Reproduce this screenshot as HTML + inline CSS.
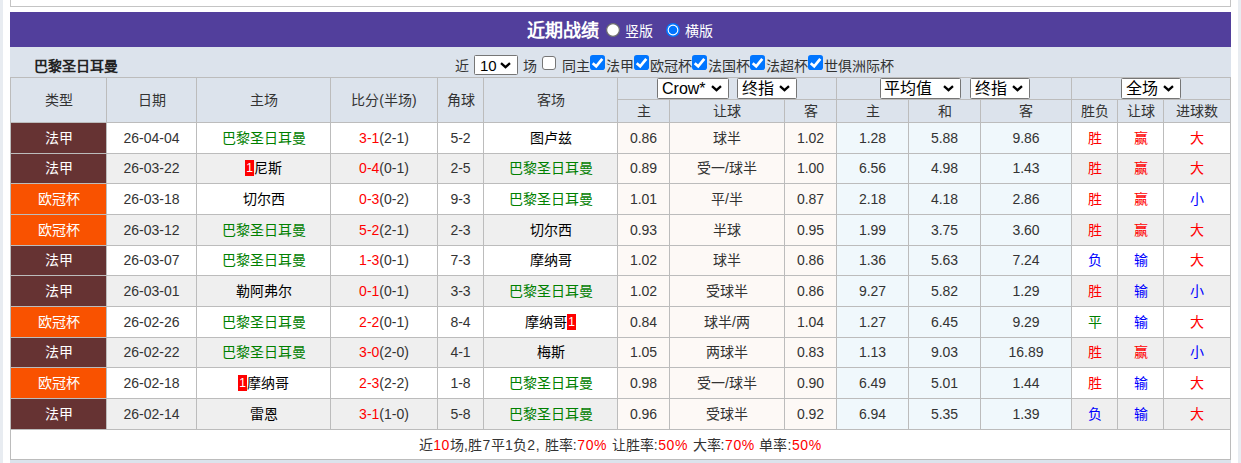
<!DOCTYPE html>
<html lang="zh-CN"><head><meta charset="utf-8"><title>近期战绩</title>
<style>
html,body{margin:0;padding:0;}
body{width:1241px;height:463px;overflow:hidden;background:#e8ecf1;position:relative;font-family:"Liberation Sans",sans-serif;font-size:14px;color:#333;}
#wrap{position:absolute;left:3px;top:0;width:1235px;height:463px;background:#fff;}
.r{position:absolute;}
.ab{position:absolute;}
.t14{font-size:14px;line-height:16px;white-space:nowrap;color:#333;}
.c{position:absolute;text-align:center;white-space:nowrap;overflow:visible;}
.bd{display:inline-block;background:#f00;color:#fff;font-size:12px;width:9px;height:16px;line-height:16px;vertical-align:middle;text-align:center;font-weight:normal;position:relative;top:-1px;}
.red{color:#f00;}
.L{letter-spacing:0.62px;}
#prev{position:absolute;left:10px;top:-10px;width:1219px;height:15px;border:1px solid #c4c4c4;background:#fff;}
#bar{position:absolute;left:10px;top:12px;width:1221px;height:35px;background:#523f9c;color:#fff;}
#title{position:absolute;left:517px;top:9px;font-size:18px;font-weight:bold;line-height:20px;}
.rl{position:absolute;top:11px;font-size:14px;line-height:16px;}
#team{position:absolute;left:34px;top:57px;font-weight:bold;font-size:14px;color:#222;line-height:18px;}
.sel{position:absolute;box-sizing:border-box;border:1px solid #767676;background:#fff;color:#000;border-radius:1.5px;}
.sel .t{position:absolute;top:0;white-space:nowrap;}
.chev{position:absolute;}
</style></head><body><div id="wrap"></div>
<div id="prev"></div>
<div id="bar"><div id="title">近期战绩</div>
<svg class="ab" style="left:596px;top:11px" width="14" height="14" viewBox="0 0 14 14"><circle cx="7" cy="7" r="6.4" fill="#fff" stroke="#6d6d6d" stroke-width="1.2"/></svg><div class="rl" style="left:615px;">竖版</div>
<svg class="ab" style="left:656px;top:11px" width="14" height="14" viewBox="0 0 14 14"><circle cx="7" cy="7" r="7" fill="#0075ff"/><circle cx="7" cy="7" r="5.4" fill="#fff"/><circle cx="7" cy="7" r="4.3" fill="#0075ff"/></svg><div class="rl" style="left:675px;">横版</div>
</div>
<div class="r" style="left:10px;top:47px;width:1221px;height:76px;background:#dce3ec;"></div>
<div class="r" style="left:10px;top:123px;width:1221px;height:30px;background:#fff;"></div>
<div class="r" style="left:618px;top:123px;width:218px;height:30px;background:#fdf9f6;"></div>
<div class="r" style="left:837px;top:123px;width:234px;height:30px;background:#f0f8fc;"></div>
<div class="r" style="left:10px;top:123px;width:96px;height:30px;background:#663333;"></div>
<div class="r" style="left:10px;top:154px;width:1221px;height:29px;background:#efefef;"></div>
<div class="r" style="left:618px;top:154px;width:218px;height:29px;background:#fdf9f6;"></div>
<div class="r" style="left:837px;top:154px;width:234px;height:29px;background:#f0f8fc;"></div>
<div class="r" style="left:10px;top:154px;width:96px;height:29px;background:#663333;"></div>
<div class="r" style="left:10px;top:184px;width:1221px;height:30px;background:#fff;"></div>
<div class="r" style="left:618px;top:184px;width:218px;height:30px;background:#fdf9f6;"></div>
<div class="r" style="left:837px;top:184px;width:234px;height:30px;background:#f0f8fc;"></div>
<div class="r" style="left:10px;top:184px;width:96px;height:30px;background:#f95200;"></div>
<div class="r" style="left:10px;top:215px;width:1221px;height:30px;background:#efefef;"></div>
<div class="r" style="left:618px;top:215px;width:218px;height:30px;background:#fdf9f6;"></div>
<div class="r" style="left:837px;top:215px;width:234px;height:30px;background:#f0f8fc;"></div>
<div class="r" style="left:10px;top:215px;width:96px;height:30px;background:#f95200;"></div>
<div class="r" style="left:10px;top:246px;width:1221px;height:29px;background:#fff;"></div>
<div class="r" style="left:618px;top:246px;width:218px;height:29px;background:#fdf9f6;"></div>
<div class="r" style="left:837px;top:246px;width:234px;height:29px;background:#f0f8fc;"></div>
<div class="r" style="left:10px;top:246px;width:96px;height:29px;background:#663333;"></div>
<div class="r" style="left:10px;top:276px;width:1221px;height:30px;background:#efefef;"></div>
<div class="r" style="left:618px;top:276px;width:218px;height:30px;background:#fdf9f6;"></div>
<div class="r" style="left:837px;top:276px;width:234px;height:30px;background:#f0f8fc;"></div>
<div class="r" style="left:10px;top:276px;width:96px;height:30px;background:#663333;"></div>
<div class="r" style="left:10px;top:307px;width:1221px;height:30px;background:#fff;"></div>
<div class="r" style="left:618px;top:307px;width:218px;height:30px;background:#fdf9f6;"></div>
<div class="r" style="left:837px;top:307px;width:234px;height:30px;background:#f0f8fc;"></div>
<div class="r" style="left:10px;top:307px;width:96px;height:30px;background:#f95200;"></div>
<div class="r" style="left:10px;top:338px;width:1221px;height:29px;background:#efefef;"></div>
<div class="r" style="left:618px;top:338px;width:218px;height:29px;background:#fdf9f6;"></div>
<div class="r" style="left:837px;top:338px;width:234px;height:29px;background:#f0f8fc;"></div>
<div class="r" style="left:10px;top:338px;width:96px;height:29px;background:#663333;"></div>
<div class="r" style="left:10px;top:368px;width:1221px;height:30px;background:#fff;"></div>
<div class="r" style="left:618px;top:368px;width:218px;height:30px;background:#fdf9f6;"></div>
<div class="r" style="left:837px;top:368px;width:234px;height:30px;background:#f0f8fc;"></div>
<div class="r" style="left:10px;top:368px;width:96px;height:30px;background:#f95200;"></div>
<div class="r" style="left:10px;top:399px;width:1221px;height:30px;background:#efefef;"></div>
<div class="r" style="left:618px;top:399px;width:218px;height:30px;background:#fdf9f6;"></div>
<div class="r" style="left:837px;top:399px;width:234px;height:30px;background:#f0f8fc;"></div>
<div class="r" style="left:10px;top:399px;width:96px;height:30px;background:#663333;"></div>
<div class="r" style="left:10px;top:430px;width:1221px;height:29px;background:#fff;"></div>
<div class="r" style="left:10px;top:460px;width:1221px;height:3px;background:#dce3ec;"></div>
<div class="r" style="left:10px;top:77px;width:1221px;height:1px;background:#bcbcbc;"></div>
<div class="r" style="left:10px;top:122px;width:1221px;height:1px;background:#bcbcbc;"></div>
<div class="r" style="left:10px;top:153px;width:1221px;height:1px;background:#bcbcbc;"></div>
<div class="r" style="left:10px;top:183px;width:1221px;height:1px;background:#bcbcbc;"></div>
<div class="r" style="left:10px;top:214px;width:1221px;height:1px;background:#bcbcbc;"></div>
<div class="r" style="left:10px;top:245px;width:1221px;height:1px;background:#bcbcbc;"></div>
<div class="r" style="left:10px;top:275px;width:1221px;height:1px;background:#bcbcbc;"></div>
<div class="r" style="left:10px;top:306px;width:1221px;height:1px;background:#bcbcbc;"></div>
<div class="r" style="left:10px;top:337px;width:1221px;height:1px;background:#bcbcbc;"></div>
<div class="r" style="left:10px;top:367px;width:1221px;height:1px;background:#bcbcbc;"></div>
<div class="r" style="left:10px;top:398px;width:1221px;height:1px;background:#bcbcbc;"></div>
<div class="r" style="left:10px;top:429px;width:1221px;height:1px;background:#bcbcbc;"></div>
<div class="r" style="left:10px;top:459px;width:1221px;height:1px;background:#bcbcbc;"></div>
<div class="r" style="left:617px;top:99px;width:614px;height:1px;background:#bcbcbc;"></div>
<div class="r" style="left:10px;top:77px;width:1px;height:382px;background:#bcbcbc;"></div>
<div class="r" style="left:106px;top:77px;width:1px;height:352px;background:#bcbcbc;"></div>
<div class="r" style="left:196px;top:77px;width:1px;height:352px;background:#bcbcbc;"></div>
<div class="r" style="left:330px;top:77px;width:1px;height:352px;background:#bcbcbc;"></div>
<div class="r" style="left:437px;top:77px;width:1px;height:352px;background:#bcbcbc;"></div>
<div class="r" style="left:483px;top:77px;width:1px;height:352px;background:#bcbcbc;"></div>
<div class="r" style="left:617px;top:77px;width:1px;height:352px;background:#bcbcbc;"></div>
<div class="r" style="left:669px;top:99px;width:1px;height:330px;background:#bcbcbc;"></div>
<div class="r" style="left:784px;top:99px;width:1px;height:330px;background:#bcbcbc;"></div>
<div class="r" style="left:836px;top:77px;width:1px;height:352px;background:#bcbcbc;"></div>
<div class="r" style="left:908px;top:99px;width:1px;height:330px;background:#bcbcbc;"></div>
<div class="r" style="left:980px;top:99px;width:1px;height:330px;background:#bcbcbc;"></div>
<div class="r" style="left:1071px;top:77px;width:1px;height:352px;background:#bcbcbc;"></div>
<div class="r" style="left:1117px;top:99px;width:1px;height:330px;background:#bcbcbc;"></div>
<div class="r" style="left:1163px;top:99px;width:1px;height:330px;background:#bcbcbc;"></div>
<div class="r" style="left:1230px;top:77px;width:1px;height:382px;background:#bcbcbc;"></div>
<div class="c" style="left:11px;top:78px;width:95px;height:44px;line-height:44px;">类型</div>
<div class="c" style="left:107px;top:78px;width:89px;height:44px;line-height:44px;">日期</div>
<div class="c" style="left:197px;top:78px;width:133px;height:44px;line-height:44px;">主场</div>
<div class="c" style="left:331px;top:78px;width:106px;height:44px;line-height:44px;">比分(半场)</div>
<div class="c" style="left:438px;top:78px;width:45px;height:44px;line-height:44px;">角球</div>
<div class="c" style="left:484px;top:78px;width:133px;height:44px;line-height:44px;">客场</div>
<div class="c" style="left:618px;top:100px;width:51px;height:22px;line-height:22px;">主</div>
<div class="c" style="left:670px;top:100px;width:114px;height:22px;line-height:22px;">让球</div>
<div class="c" style="left:785px;top:100px;width:51px;height:22px;line-height:22px;">客</div>
<div class="c" style="left:837px;top:100px;width:71px;height:22px;line-height:22px;">主</div>
<div class="c" style="left:909px;top:100px;width:71px;height:22px;line-height:22px;">和</div>
<div class="c" style="left:981px;top:100px;width:90px;height:22px;line-height:22px;">客</div>
<div class="c" style="left:1072px;top:100px;width:45px;height:22px;line-height:22px;">胜负</div>
<div class="c" style="left:1118px;top:100px;width:45px;height:22px;line-height:22px;">让球</div>
<div class="c" style="left:1164px;top:100px;width:66px;height:22px;line-height:22px;">进球数</div>
<div class="c" style="left:11px;top:123px;width:95px;height:30px;line-height:30px;color:#fff">法甲</div>
<div class="c" style="left:107px;top:123px;width:89px;height:30px;line-height:30px;color:#333">26-04-04</div>
<div class="c" style="left:197px;top:123px;width:133px;height:30px;line-height:30px;"><span style="color:#008000">巴黎圣日耳曼</span></div>
<div class="c" style="left:331px;top:123px;width:106px;height:30px;line-height:30px;color:#333"><span style="color:#f00">3-1</span>(2-1)</div>
<div class="c" style="left:438px;top:123px;width:45px;height:30px;line-height:30px;color:#333">5-2</div>
<div class="c" style="left:484px;top:123px;width:133px;height:30px;line-height:30px;"><span style="color:#000">图卢兹</span></div>
<div class="c" style="left:618px;top:123px;width:51px;height:30px;line-height:30px;color:#333">0.86</div>
<div class="c" style="left:670px;top:123px;width:114px;height:30px;line-height:30px;color:#333">球半</div>
<div class="c" style="left:785px;top:123px;width:51px;height:30px;line-height:30px;color:#333">1.02</div>
<div class="c" style="left:837px;top:123px;width:71px;height:30px;line-height:30px;color:#333">1.28</div>
<div class="c" style="left:909px;top:123px;width:71px;height:30px;line-height:30px;color:#333">5.88</div>
<div class="c" style="left:981px;top:123px;width:90px;height:30px;line-height:30px;color:#333">9.86</div>
<div class="c" style="left:1072px;top:123px;width:45px;height:30px;line-height:30px;color:#f00">胜</div>
<div class="c" style="left:1118px;top:123px;width:45px;height:30px;line-height:30px;color:#f00">赢</div>
<div class="c" style="left:1164px;top:123px;width:66px;height:30px;line-height:30px;color:#f00">大</div>
<div class="c" style="left:11px;top:154px;width:95px;height:29px;line-height:29px;color:#fff">法甲</div>
<div class="c" style="left:107px;top:154px;width:89px;height:29px;line-height:29px;color:#333">26-03-22</div>
<div class="c" style="left:197px;top:154px;width:133px;height:29px;line-height:29px;"><span style="color:#000"><span class="bd">1</span>尼斯</span></div>
<div class="c" style="left:331px;top:154px;width:106px;height:29px;line-height:29px;color:#333"><span style="color:#f00">0-4</span>(0-1)</div>
<div class="c" style="left:438px;top:154px;width:45px;height:29px;line-height:29px;color:#333">2-5</div>
<div class="c" style="left:484px;top:154px;width:133px;height:29px;line-height:29px;"><span style="color:#008000">巴黎圣日耳曼</span></div>
<div class="c" style="left:618px;top:154px;width:51px;height:29px;line-height:29px;color:#333">0.89</div>
<div class="c" style="left:670px;top:154px;width:114px;height:29px;line-height:29px;color:#333">受一/球半</div>
<div class="c" style="left:785px;top:154px;width:51px;height:29px;line-height:29px;color:#333">1.00</div>
<div class="c" style="left:837px;top:154px;width:71px;height:29px;line-height:29px;color:#333">6.56</div>
<div class="c" style="left:909px;top:154px;width:71px;height:29px;line-height:29px;color:#333">4.98</div>
<div class="c" style="left:981px;top:154px;width:90px;height:29px;line-height:29px;color:#333">1.43</div>
<div class="c" style="left:1072px;top:154px;width:45px;height:29px;line-height:29px;color:#f00">胜</div>
<div class="c" style="left:1118px;top:154px;width:45px;height:29px;line-height:29px;color:#f00">赢</div>
<div class="c" style="left:1164px;top:154px;width:66px;height:29px;line-height:29px;color:#f00">大</div>
<div class="c" style="left:11px;top:184px;width:95px;height:30px;line-height:30px;color:#fff">欧冠杯</div>
<div class="c" style="left:107px;top:184px;width:89px;height:30px;line-height:30px;color:#333">26-03-18</div>
<div class="c" style="left:197px;top:184px;width:133px;height:30px;line-height:30px;"><span style="color:#000">切尔西</span></div>
<div class="c" style="left:331px;top:184px;width:106px;height:30px;line-height:30px;color:#333"><span style="color:#f00">0-3</span>(0-2)</div>
<div class="c" style="left:438px;top:184px;width:45px;height:30px;line-height:30px;color:#333">9-3</div>
<div class="c" style="left:484px;top:184px;width:133px;height:30px;line-height:30px;"><span style="color:#008000">巴黎圣日耳曼</span></div>
<div class="c" style="left:618px;top:184px;width:51px;height:30px;line-height:30px;color:#333">1.01</div>
<div class="c" style="left:670px;top:184px;width:114px;height:30px;line-height:30px;color:#333">平/半</div>
<div class="c" style="left:785px;top:184px;width:51px;height:30px;line-height:30px;color:#333">0.87</div>
<div class="c" style="left:837px;top:184px;width:71px;height:30px;line-height:30px;color:#333">2.18</div>
<div class="c" style="left:909px;top:184px;width:71px;height:30px;line-height:30px;color:#333">4.18</div>
<div class="c" style="left:981px;top:184px;width:90px;height:30px;line-height:30px;color:#333">2.86</div>
<div class="c" style="left:1072px;top:184px;width:45px;height:30px;line-height:30px;color:#f00">胜</div>
<div class="c" style="left:1118px;top:184px;width:45px;height:30px;line-height:30px;color:#f00">赢</div>
<div class="c" style="left:1164px;top:184px;width:66px;height:30px;line-height:30px;color:#00f">小</div>
<div class="c" style="left:11px;top:215px;width:95px;height:30px;line-height:30px;color:#fff">欧冠杯</div>
<div class="c" style="left:107px;top:215px;width:89px;height:30px;line-height:30px;color:#333">26-03-12</div>
<div class="c" style="left:197px;top:215px;width:133px;height:30px;line-height:30px;"><span style="color:#008000">巴黎圣日耳曼</span></div>
<div class="c" style="left:331px;top:215px;width:106px;height:30px;line-height:30px;color:#333"><span style="color:#f00">5-2</span>(2-1)</div>
<div class="c" style="left:438px;top:215px;width:45px;height:30px;line-height:30px;color:#333">2-3</div>
<div class="c" style="left:484px;top:215px;width:133px;height:30px;line-height:30px;"><span style="color:#000">切尔西</span></div>
<div class="c" style="left:618px;top:215px;width:51px;height:30px;line-height:30px;color:#333">0.93</div>
<div class="c" style="left:670px;top:215px;width:114px;height:30px;line-height:30px;color:#333">半球</div>
<div class="c" style="left:785px;top:215px;width:51px;height:30px;line-height:30px;color:#333">0.95</div>
<div class="c" style="left:837px;top:215px;width:71px;height:30px;line-height:30px;color:#333">1.99</div>
<div class="c" style="left:909px;top:215px;width:71px;height:30px;line-height:30px;color:#333">3.75</div>
<div class="c" style="left:981px;top:215px;width:90px;height:30px;line-height:30px;color:#333">3.60</div>
<div class="c" style="left:1072px;top:215px;width:45px;height:30px;line-height:30px;color:#f00">胜</div>
<div class="c" style="left:1118px;top:215px;width:45px;height:30px;line-height:30px;color:#f00">赢</div>
<div class="c" style="left:1164px;top:215px;width:66px;height:30px;line-height:30px;color:#f00">大</div>
<div class="c" style="left:11px;top:246px;width:95px;height:29px;line-height:29px;color:#fff">法甲</div>
<div class="c" style="left:107px;top:246px;width:89px;height:29px;line-height:29px;color:#333">26-03-07</div>
<div class="c" style="left:197px;top:246px;width:133px;height:29px;line-height:29px;"><span style="color:#008000">巴黎圣日耳曼</span></div>
<div class="c" style="left:331px;top:246px;width:106px;height:29px;line-height:29px;color:#333"><span style="color:#f00">1-3</span>(0-1)</div>
<div class="c" style="left:438px;top:246px;width:45px;height:29px;line-height:29px;color:#333">7-3</div>
<div class="c" style="left:484px;top:246px;width:133px;height:29px;line-height:29px;"><span style="color:#000">摩纳哥</span></div>
<div class="c" style="left:618px;top:246px;width:51px;height:29px;line-height:29px;color:#333">1.02</div>
<div class="c" style="left:670px;top:246px;width:114px;height:29px;line-height:29px;color:#333">球半</div>
<div class="c" style="left:785px;top:246px;width:51px;height:29px;line-height:29px;color:#333">0.86</div>
<div class="c" style="left:837px;top:246px;width:71px;height:29px;line-height:29px;color:#333">1.36</div>
<div class="c" style="left:909px;top:246px;width:71px;height:29px;line-height:29px;color:#333">5.63</div>
<div class="c" style="left:981px;top:246px;width:90px;height:29px;line-height:29px;color:#333">7.24</div>
<div class="c" style="left:1072px;top:246px;width:45px;height:29px;line-height:29px;color:#00f">负</div>
<div class="c" style="left:1118px;top:246px;width:45px;height:29px;line-height:29px;color:#00f">输</div>
<div class="c" style="left:1164px;top:246px;width:66px;height:29px;line-height:29px;color:#f00">大</div>
<div class="c" style="left:11px;top:276px;width:95px;height:30px;line-height:30px;color:#fff">法甲</div>
<div class="c" style="left:107px;top:276px;width:89px;height:30px;line-height:30px;color:#333">26-03-01</div>
<div class="c" style="left:197px;top:276px;width:133px;height:30px;line-height:30px;"><span style="color:#000">勒阿弗尔</span></div>
<div class="c" style="left:331px;top:276px;width:106px;height:30px;line-height:30px;color:#333"><span style="color:#f00">0-1</span>(0-1)</div>
<div class="c" style="left:438px;top:276px;width:45px;height:30px;line-height:30px;color:#333">3-3</div>
<div class="c" style="left:484px;top:276px;width:133px;height:30px;line-height:30px;"><span style="color:#008000">巴黎圣日耳曼</span></div>
<div class="c" style="left:618px;top:276px;width:51px;height:30px;line-height:30px;color:#333">1.02</div>
<div class="c" style="left:670px;top:276px;width:114px;height:30px;line-height:30px;color:#333">受球半</div>
<div class="c" style="left:785px;top:276px;width:51px;height:30px;line-height:30px;color:#333">0.86</div>
<div class="c" style="left:837px;top:276px;width:71px;height:30px;line-height:30px;color:#333">9.27</div>
<div class="c" style="left:909px;top:276px;width:71px;height:30px;line-height:30px;color:#333">5.82</div>
<div class="c" style="left:981px;top:276px;width:90px;height:30px;line-height:30px;color:#333">1.29</div>
<div class="c" style="left:1072px;top:276px;width:45px;height:30px;line-height:30px;color:#f00">胜</div>
<div class="c" style="left:1118px;top:276px;width:45px;height:30px;line-height:30px;color:#00f">输</div>
<div class="c" style="left:1164px;top:276px;width:66px;height:30px;line-height:30px;color:#00f">小</div>
<div class="c" style="left:11px;top:307px;width:95px;height:30px;line-height:30px;color:#fff">欧冠杯</div>
<div class="c" style="left:107px;top:307px;width:89px;height:30px;line-height:30px;color:#333">26-02-26</div>
<div class="c" style="left:197px;top:307px;width:133px;height:30px;line-height:30px;"><span style="color:#008000">巴黎圣日耳曼</span></div>
<div class="c" style="left:331px;top:307px;width:106px;height:30px;line-height:30px;color:#333"><span style="color:#f00">2-2</span>(0-1)</div>
<div class="c" style="left:438px;top:307px;width:45px;height:30px;line-height:30px;color:#333">8-4</div>
<div class="c" style="left:484px;top:307px;width:133px;height:30px;line-height:30px;"><span style="color:#000">摩纳哥<span class="bd">1</span></span></div>
<div class="c" style="left:618px;top:307px;width:51px;height:30px;line-height:30px;color:#333">0.84</div>
<div class="c" style="left:670px;top:307px;width:114px;height:30px;line-height:30px;color:#333">球半/两</div>
<div class="c" style="left:785px;top:307px;width:51px;height:30px;line-height:30px;color:#333">1.04</div>
<div class="c" style="left:837px;top:307px;width:71px;height:30px;line-height:30px;color:#333">1.27</div>
<div class="c" style="left:909px;top:307px;width:71px;height:30px;line-height:30px;color:#333">6.45</div>
<div class="c" style="left:981px;top:307px;width:90px;height:30px;line-height:30px;color:#333">9.29</div>
<div class="c" style="left:1072px;top:307px;width:45px;height:30px;line-height:30px;color:#008000">平</div>
<div class="c" style="left:1118px;top:307px;width:45px;height:30px;line-height:30px;color:#00f">输</div>
<div class="c" style="left:1164px;top:307px;width:66px;height:30px;line-height:30px;color:#f00">大</div>
<div class="c" style="left:11px;top:338px;width:95px;height:29px;line-height:29px;color:#fff">法甲</div>
<div class="c" style="left:107px;top:338px;width:89px;height:29px;line-height:29px;color:#333">26-02-22</div>
<div class="c" style="left:197px;top:338px;width:133px;height:29px;line-height:29px;"><span style="color:#008000">巴黎圣日耳曼</span></div>
<div class="c" style="left:331px;top:338px;width:106px;height:29px;line-height:29px;color:#333"><span style="color:#f00">3-0</span>(2-0)</div>
<div class="c" style="left:438px;top:338px;width:45px;height:29px;line-height:29px;color:#333">4-1</div>
<div class="c" style="left:484px;top:338px;width:133px;height:29px;line-height:29px;"><span style="color:#000">梅斯</span></div>
<div class="c" style="left:618px;top:338px;width:51px;height:29px;line-height:29px;color:#333">1.05</div>
<div class="c" style="left:670px;top:338px;width:114px;height:29px;line-height:29px;color:#333">两球半</div>
<div class="c" style="left:785px;top:338px;width:51px;height:29px;line-height:29px;color:#333">0.83</div>
<div class="c" style="left:837px;top:338px;width:71px;height:29px;line-height:29px;color:#333">1.13</div>
<div class="c" style="left:909px;top:338px;width:71px;height:29px;line-height:29px;color:#333">9.03</div>
<div class="c" style="left:981px;top:338px;width:90px;height:29px;line-height:29px;color:#333">16.89</div>
<div class="c" style="left:1072px;top:338px;width:45px;height:29px;line-height:29px;color:#f00">胜</div>
<div class="c" style="left:1118px;top:338px;width:45px;height:29px;line-height:29px;color:#f00">赢</div>
<div class="c" style="left:1164px;top:338px;width:66px;height:29px;line-height:29px;color:#00f">小</div>
<div class="c" style="left:11px;top:368px;width:95px;height:30px;line-height:30px;color:#fff">欧冠杯</div>
<div class="c" style="left:107px;top:368px;width:89px;height:30px;line-height:30px;color:#333">26-02-18</div>
<div class="c" style="left:197px;top:368px;width:133px;height:30px;line-height:30px;"><span style="color:#000"><span class="bd">1</span>摩纳哥</span></div>
<div class="c" style="left:331px;top:368px;width:106px;height:30px;line-height:30px;color:#333"><span style="color:#f00">2-3</span>(2-2)</div>
<div class="c" style="left:438px;top:368px;width:45px;height:30px;line-height:30px;color:#333">1-8</div>
<div class="c" style="left:484px;top:368px;width:133px;height:30px;line-height:30px;"><span style="color:#008000">巴黎圣日耳曼</span></div>
<div class="c" style="left:618px;top:368px;width:51px;height:30px;line-height:30px;color:#333">0.98</div>
<div class="c" style="left:670px;top:368px;width:114px;height:30px;line-height:30px;color:#333">受一/球半</div>
<div class="c" style="left:785px;top:368px;width:51px;height:30px;line-height:30px;color:#333">0.90</div>
<div class="c" style="left:837px;top:368px;width:71px;height:30px;line-height:30px;color:#333">6.49</div>
<div class="c" style="left:909px;top:368px;width:71px;height:30px;line-height:30px;color:#333">5.01</div>
<div class="c" style="left:981px;top:368px;width:90px;height:30px;line-height:30px;color:#333">1.44</div>
<div class="c" style="left:1072px;top:368px;width:45px;height:30px;line-height:30px;color:#f00">胜</div>
<div class="c" style="left:1118px;top:368px;width:45px;height:30px;line-height:30px;color:#00f">输</div>
<div class="c" style="left:1164px;top:368px;width:66px;height:30px;line-height:30px;color:#f00">大</div>
<div class="c" style="left:11px;top:399px;width:95px;height:30px;line-height:30px;color:#fff">法甲</div>
<div class="c" style="left:107px;top:399px;width:89px;height:30px;line-height:30px;color:#333">26-02-14</div>
<div class="c" style="left:197px;top:399px;width:133px;height:30px;line-height:30px;"><span style="color:#000">雷恩</span></div>
<div class="c" style="left:331px;top:399px;width:106px;height:30px;line-height:30px;color:#333"><span style="color:#f00">3-1</span>(1-0)</div>
<div class="c" style="left:438px;top:399px;width:45px;height:30px;line-height:30px;color:#333">5-8</div>
<div class="c" style="left:484px;top:399px;width:133px;height:30px;line-height:30px;"><span style="color:#008000">巴黎圣日耳曼</span></div>
<div class="c" style="left:618px;top:399px;width:51px;height:30px;line-height:30px;color:#333">0.96</div>
<div class="c" style="left:670px;top:399px;width:114px;height:30px;line-height:30px;color:#333">受球半</div>
<div class="c" style="left:785px;top:399px;width:51px;height:30px;line-height:30px;color:#333">0.92</div>
<div class="c" style="left:837px;top:399px;width:71px;height:30px;line-height:30px;color:#333">6.94</div>
<div class="c" style="left:909px;top:399px;width:71px;height:30px;line-height:30px;color:#333">5.35</div>
<div class="c" style="left:981px;top:399px;width:90px;height:30px;line-height:30px;color:#333">1.39</div>
<div class="c" style="left:1072px;top:399px;width:45px;height:30px;line-height:30px;color:#00f">负</div>
<div class="c" style="left:1118px;top:399px;width:45px;height:30px;line-height:30px;color:#00f">输</div>
<div class="c" style="left:1164px;top:399px;width:66px;height:30px;line-height:30px;color:#f00">大</div>
<div class="c" style="left:11px;top:431px;width:1219px;height:28px;line-height:28px;color:#333">近<span class="red L">10</span>场<span class="L">,</span>胜<span class="L">7</span>平<span class="L">1</span>负<span class="L">2, </span>胜率<span class="L">:</span><span class="red L">70% </span>让胜率<span class="L">:</span><span class="red L">50% </span>大率<span class="L">:</span><span class="red L">70% </span>单率<span class="L">:</span><span class="red L">50%</span></div>
<div id="team">巴黎圣日耳曼</div>
<div class="ab t14" style="left:455px;top:58px;">近</div>
<div class="sel" style="left:474px;top:55px;width:44px;height:20px;"><span class="t" style="left:5px;top:1px;font-size:15px;line-height:18px;">10</span><svg class="chev" style="left:25px;top:6px" width="11" height="7" viewBox="0 0 11 7"><path d="M1 1.1 L5.5 5.1 L10 1.1" fill="none" stroke="#000" stroke-width="2.3"/></svg></div>
<div class="ab t14" style="left:523px;top:58px;">场</div>
<svg class="ab" style="left:542px;top:56px" width="14" height="14" viewBox="0 0 14 14"><rect x="0.5" y="0.5" width="13" height="13" rx="2.5" fill="#fff" stroke="#767676" stroke-width="1"/></svg>
<div class="ab t14" style="left:562px;top:58px;">同主</div>
<svg class="ab" style="left:590px;top:55px" width="15" height="15" viewBox="0 0 15 15"><rect x="0" y="0" width="15" height="15" rx="2.8" fill="#0075ff"/><path d="M2.7 8.2 L6.2 11.3 L12.3 3.8" fill="none" stroke="#fff" stroke-width="2.7"/></svg>
<div class="ab t14" style="left:606px;top:58px;">法甲</div>
<svg class="ab" style="left:634px;top:55px" width="15" height="15" viewBox="0 0 15 15"><rect x="0" y="0" width="15" height="15" rx="2.8" fill="#0075ff"/><path d="M2.7 8.2 L6.2 11.3 L12.3 3.8" fill="none" stroke="#fff" stroke-width="2.7"/></svg>
<div class="ab t14" style="left:650px;top:58px;">欧冠杯</div>
<svg class="ab" style="left:692px;top:55px" width="15" height="15" viewBox="0 0 15 15"><rect x="0" y="0" width="15" height="15" rx="2.8" fill="#0075ff"/><path d="M2.7 8.2 L6.2 11.3 L12.3 3.8" fill="none" stroke="#fff" stroke-width="2.7"/></svg>
<div class="ab t14" style="left:708px;top:58px;">法国杯</div>
<svg class="ab" style="left:750px;top:55px" width="15" height="15" viewBox="0 0 15 15"><rect x="0" y="0" width="15" height="15" rx="2.8" fill="#0075ff"/><path d="M2.7 8.2 L6.2 11.3 L12.3 3.8" fill="none" stroke="#fff" stroke-width="2.7"/></svg>
<div class="ab t14" style="left:766px;top:58px;">法超杯</div>
<svg class="ab" style="left:808px;top:55px" width="15" height="15" viewBox="0 0 15 15"><rect x="0" y="0" width="15" height="15" rx="2.8" fill="#0075ff"/><path d="M2.7 8.2 L6.2 11.3 L12.3 3.8" fill="none" stroke="#fff" stroke-width="2.7"/></svg>
<div class="ab t14" style="left:824px;top:58px;">世俱洲际杯</div>
<div class="sel" style="left:657px;top:78px;width:72px;height:21px;"><span class="t" style="left:4px;top:0px;font-size:16px;line-height:19px;">Crow*</span><svg class="chev" style="left:53px;top:6px" width="11" height="7" viewBox="0 0 11 7"><path d="M1 1.1 L5.5 5.1 L10 1.1" fill="none" stroke="#000" stroke-width="2.3"/></svg></div>
<div class="sel" style="left:737px;top:78px;width:60px;height:21px;"><span class="t" style="left:4px;top:0px;font-size:16px;line-height:19px;">终指</span><svg class="chev" style="left:41px;top:6px" width="11" height="7" viewBox="0 0 11 7"><path d="M1 1.1 L5.5 5.1 L10 1.1" fill="none" stroke="#000" stroke-width="2.3"/></svg></div>
<div class="sel" style="left:880px;top:78px;width:81px;height:21px;"><span class="t" style="left:3px;top:0px;font-size:16px;line-height:19px;">平均值</span><svg class="chev" style="left:62px;top:6px" width="11" height="7" viewBox="0 0 11 7"><path d="M1 1.1 L5.5 5.1 L10 1.1" fill="none" stroke="#000" stroke-width="2.3"/></svg></div>
<div class="sel" style="left:970px;top:78px;width:60px;height:21px;"><span class="t" style="left:4px;top:0px;font-size:16px;line-height:19px;">终指</span><svg class="chev" style="left:41px;top:6px" width="11" height="7" viewBox="0 0 11 7"><path d="M1 1.1 L5.5 5.1 L10 1.1" fill="none" stroke="#000" stroke-width="2.3"/></svg></div>
<div class="sel" style="left:1121px;top:78px;width:60px;height:21px;"><span class="t" style="left:4px;top:0px;font-size:16px;line-height:19px;">全场</span><svg class="chev" style="left:41px;top:6px" width="11" height="7" viewBox="0 0 11 7"><path d="M1 1.1 L5.5 5.1 L10 1.1" fill="none" stroke="#000" stroke-width="2.3"/></svg></div>
</body></html>
